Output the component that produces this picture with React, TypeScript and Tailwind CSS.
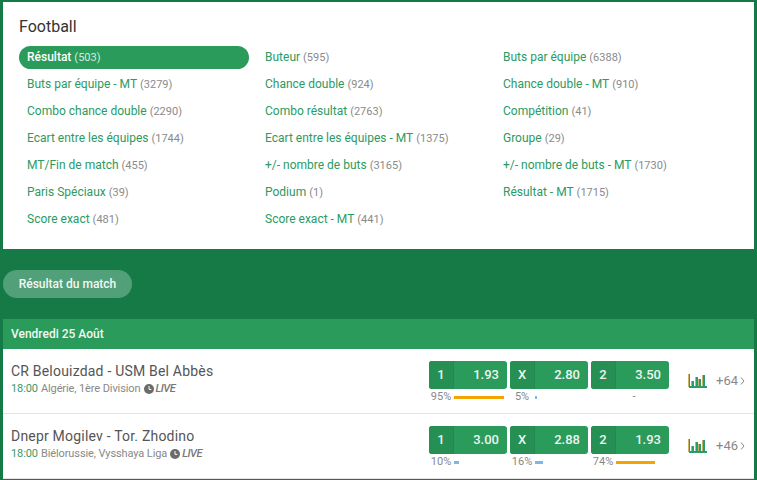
const cols: [string, string, boolean?][] = [
  ["Résultat", "503", true], ["Buteur", "595"], ["Buts par équipe", "6388"],
  ["Buts par équipe - MT", "3279"], ["Chance double", "924"], ["Chance double - MT", "910"],
  ["Combo chance double", "2290"], ["Combo résultat", "2763"], ["Compétition", "41"],
  ["Ecart entre les équipes", "1744"], ["Ecart entre les équipes - MT", "1375"], ["Groupe", "29"],
  ["MT/Fin de match", "455"], ["+/- nombre de buts", "3165"], ["+/- nombre de buts - MT", "1730"],
  ["Paris Spéciaux", "39"], ["Podium", "1"], ["Résultat - MT", "1715"],
  ["Score exact", "481"], ["Score exact - MT", "441"],
];

type Odd = { k: string; v: string; pct: string; w: number; hot?: boolean };

function Chart() {
  return (
    <svg width="19" height="14" viewBox="0 0 19 14" className="block">
      <rect x="0" y="0" width="1" height="13" fill="#c9b36a" />
      <rect x="1" y="0" width="1" height="13" fill="#2a9b6a" />
      <rect x="1" y="12" width="18" height="2" fill="#2a9b6a" />
      <rect x="3" y="7" width="1" height="5" fill="#c9b36a" />
      <rect x="4" y="7" width="2" height="5" fill="#2a9b6a" />
      <rect x="7" y="3" width="1" height="9" fill="#c9b36a" />
      <rect x="8" y="3" width="2" height="9" fill="#2a9b6a" />
      <rect x="10" y="5" width="1" height="7" fill="#c9b36a" />
      <rect x="11" y="5" width="2" height="7" fill="#2a9b6a" />
      <rect x="14" y="1" width="1" height="11" fill="#c9b36a" />
      <rect x="15" y="1" width="2" height="11" fill="#2a9b6a" />
    </svg>
  );
}

function Clock() {
  return (
    <svg width="10" height="10" viewBox="0 0 10 10" className="block">
      <circle cx="5" cy="5" r="5" fill="#6b6b6b" />
      <path d="M5 2v3.4h2.4" fill="none" stroke="#fff" strokeWidth="1" />
    </svg>
  );
}

function OddBox({ o }: { o: Odd }) {
  return (
    <div className="w-[78px]">
      <div className="flex h-[28px] overflow-hidden rounded-[3px] bg-[#2a9b5b] text-[13px] font-medium text-[#eaf6ef]">
        <div className="flex w-[25px] items-center justify-center border-r border-[#218a50] bg-[#268f54]">{o.k}</div>
        <div className="flex flex-1 items-center justify-end pr-[8px]">{o.v}</div>
      </div>
      <div className="mt-[2px] flex h-[12px] items-center text-[11px] leading-[12px] text-[#888]">
        {o.pct === "-" ? (
          <span className="w-full pl-[8px] text-center">-</span>
        ) : (
          <>
            <span className="w-[24px] shrink-0 text-center">{o.pct}</span>
            <span className={`ml-[1px] h-[3px] ${o.hot ? "bg-[#f5a300]" : "bg-[#7db8e3]"}`} style={{ width: o.w }} />
          </>
        )}
      </div>
    </div>
  );
}

function Match({ name, info, odds, more }: { name: string; info: string; odds: Odd[]; more: string }) {
  return (
    <div className="flex h-[65px] border-b border-[#e3e3e3] bg-white">
      <div className="flex-1 pl-[8px] pt-[13px]">
        <div className="text-[14px] leading-[18px] tracking-[0.2px] text-[#555]">{name}</div>
        <div className="mt-[1px] flex items-center text-[11px] leading-[15px] tracking-[-0.1px] text-[#888]">
          <span className="text-[#3a9a68]">18:00</span>
          <span className="ml-[3px]">{info}</span>
          <span className="ml-[3px]"><Clock /></span>
          <span className="ml-[2px] text-[11px] font-medium italic tracking-[-0.5px] text-[#777]">LIVE</span>
        </div>
      </div>
      <div className="flex gap-[3px] pt-[12px]">
        {odds.map((o) => <OddBox key={o.k} o={o} />)}
      </div>
      <div className="flex w-[85px] items-start pl-[19px] pt-[25px]">
        <Chart />
        <span className="-mt-[1px] ml-[9px] text-[13px] leading-[15px] text-[#888]">{more}</span>
        <svg width="5" height="8" viewBox="0 0 5 8" className="ml-[2px] mt-[3px]">
          <path d="M1 0.5 4 4 1 7.5" fill="none" stroke="#888" strokeWidth="1" />
        </svg>
      </div>
    </div>
  );
}

export default function App() {
  return (
    <div className="h-[480px] w-[757px] overflow-hidden bg-[#157a45] px-[3px] pt-[2px] font-['Roboto',sans-serif]">
      <div className="h-[247px] bg-white pl-[16px] pt-[15px]">
        <h1 className="text-[16px] font-normal leading-[20px] text-[#333]">Football</h1>
        <div className="mt-[9px] grid grid-cols-[238px_238px_238px] auto-rows-[27px]">
          {cols.map(([n, c, active]) => (
            <div key={n} className="h-[23px]">
              <div className={`flex h-[23px] w-[230px] items-baseline rounded-[12px] pl-[8px] text-[12px] leading-[22px] ${active ? "bg-[#2a9b5b] font-medium text-white" : "text-[#2b9a63]"}`}>
                <span className="whitespace-nowrap">{n}</span>
                <span className={`ml-[3px] text-[11px] font-normal ${active ? "text-[#d5ecdf]" : "text-[#8a8a8a]"}`}>({c})</span>
              </div>
            </div>
          ))}
        </div>
      </div>
      <div className="mt-[21px] flex h-[28px] w-[129px] items-center justify-center rounded-[14px] bg-[#52a07a] text-[12px] font-medium text-[#f2f8f4]">
        Résultat du match
      </div>
      <div className="mt-[21px] flex h-[30px] items-center bg-[#2a9b5b] pl-[8px] text-[12px] font-medium text-[#f2f8f4]">
        Vendredi 25 Août
      </div>
      <Match
        name="CR Belouizdad - USM Bel Abbès"
        info="Algérie, 1ère Division"
        more="+64"
        odds={[
          { k: "1", v: "1.93", pct: "95%", w: 50, hot: true },
          { k: "X", v: "2.80", pct: "5%", w: 2 },
          { k: "2", v: "3.50", pct: "-", w: 0 },
        ]}
      />
      <Match
        name="Dnepr Mogilev - Tor. Zhodino"
        info="Biélorussie, Vysshaya Liga"
        more="+46"
        odds={[
          { k: "1", v: "3.00", pct: "10%", w: 5 },
          { k: "X", v: "2.88", pct: "16%", w: 8 },
          { k: "2", v: "1.93", pct: "74%", w: 39, hot: true },
        ]}
      />
    </div>
  );
}
